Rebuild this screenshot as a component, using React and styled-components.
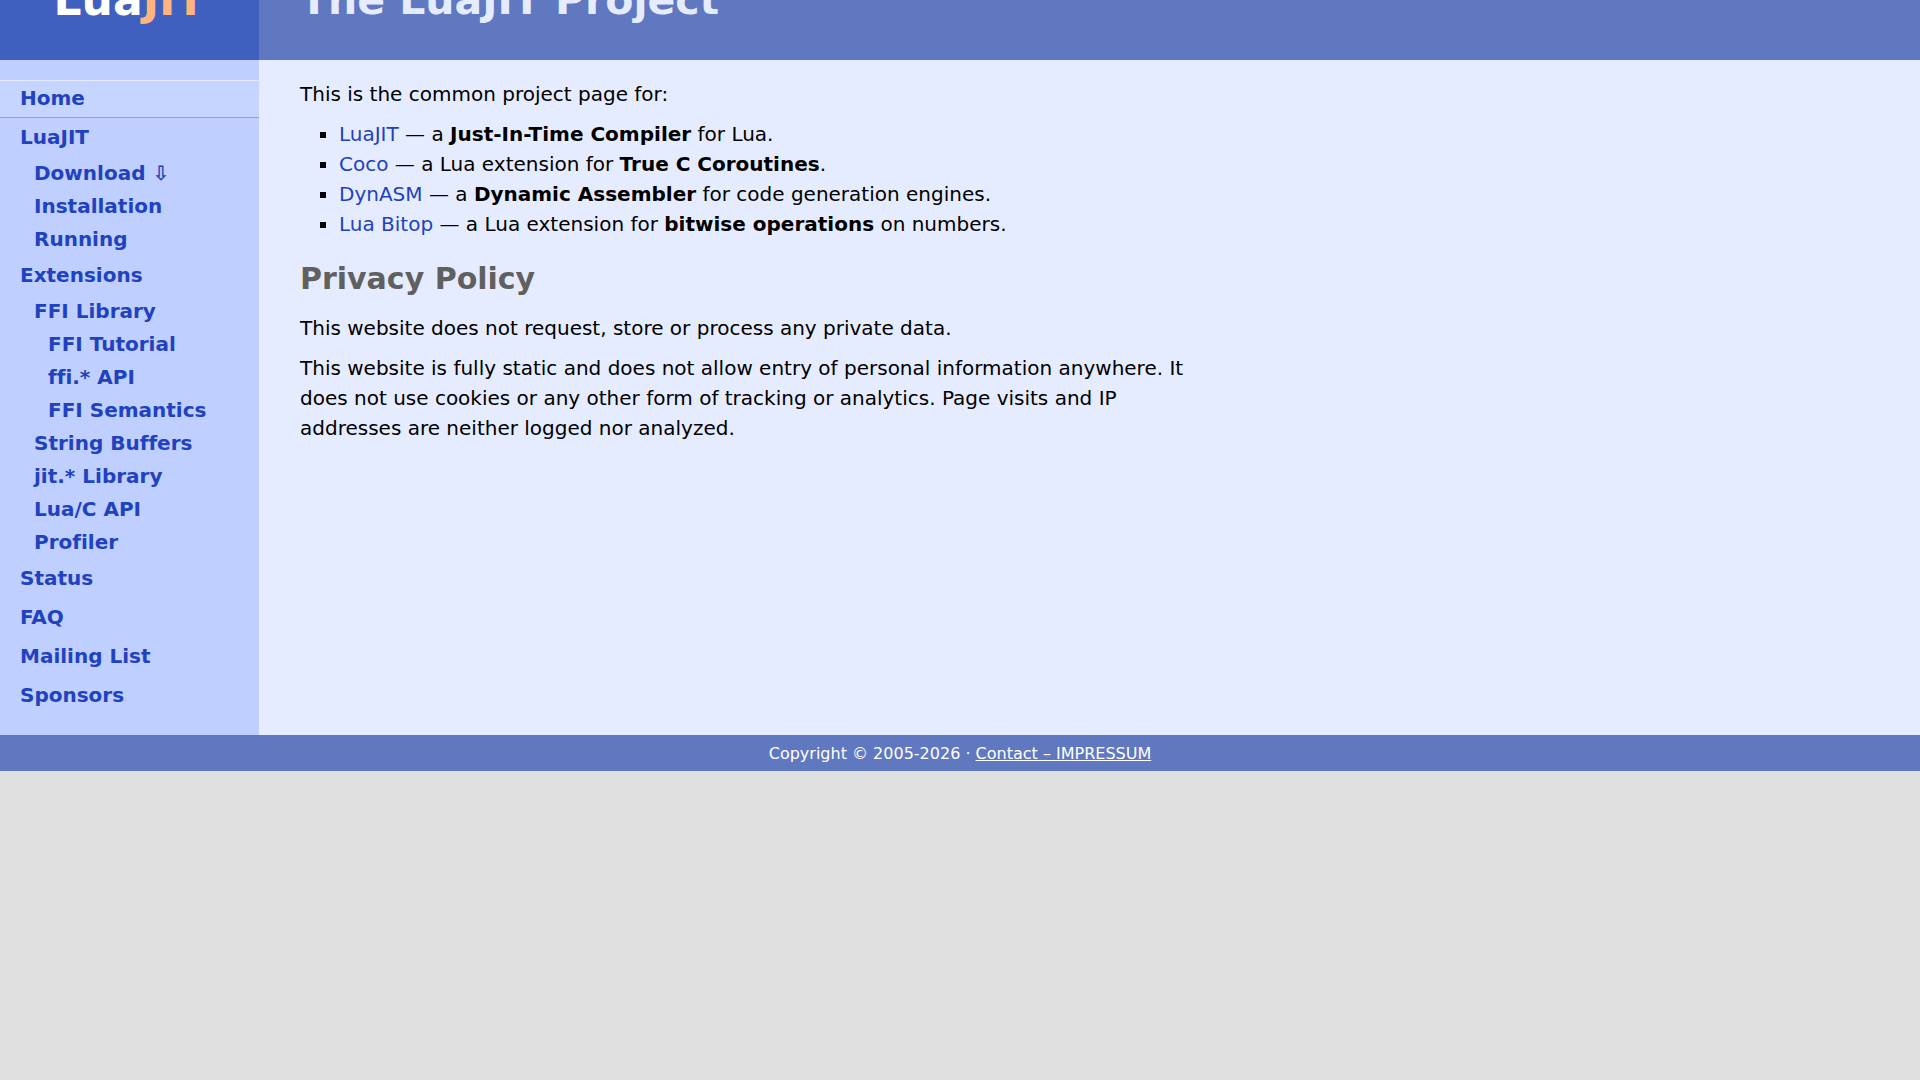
import React from 'react';
import styled, { createGlobalStyle } from 'styled-components';

const navItems = [
  { level: 0, label: 'Home', current: true },
  { level: 0, label: 'LuaJIT' },
  { level: 1, label: 'Download ⇩' },
  { level: 1, label: 'Installation' },
  { level: 1, label: 'Running' },
  { level: 0, label: 'Extensions' },
  { level: 1, label: 'FFI Library' },
  { level: 2, label: 'FFI Tutorial' },
  { level: 2, label: 'ffi.* API' },
  { level: 2, label: 'FFI Semantics' },
  { level: 1, label: 'String Buffers' },
  { level: 1, label: 'jit.* Library' },
  { level: 1, label: 'Lua/C API' },
  { level: 1, label: 'Profiler' },
  { level: 0, label: 'Status' },
  { level: 0, label: 'FAQ' },
  { level: 0, label: 'Mailing List' },
  { level: 0, label: 'Sponsors' },
];

const projects = [
  { name: 'LuaJIT', before: 'a', what: 'Just-In-Time Compiler', after: ' for Lua.' },
  { name: 'Coco', before: 'a Lua extension for', what: 'True C Coroutines', after: '.' },
  { name: 'DynASM', before: 'a', what: 'Dynamic Assembler', after: ' for code generation engines.' },
  { name: 'Lua Bitop', before: 'a Lua extension for', what: 'bitwise operations', after: ' on numbers.' },
];

const App = () => (
  <>
    <GlobalStyle />
    <Header>
      <Logo href="#">Lua<span>JIT</span></Logo>
      <Title>The LuaJIT Project</Title>
    </Header>
    <Body>
      <Nav>
        {navItems.map(item => (
          <NavLink key={item.label} href="#" $level={item.level} $current={item.current}>
            {item.label}
          </NavLink>
        ))}
      </Nav>
      <Main>
        <Paragraph>This is the common project page for:</Paragraph>
        <List>
          {projects.map(p => (
            <li key={p.name}>
              <Link href="#">{p.name}</Link> — {p.before} <b>{p.what}</b>{p.after}
            </li>
          ))}
        </List>
        <Heading>Privacy Policy</Heading>
        <Paragraph>This website does not request, store or process any private data.</Paragraph>
        <Paragraph>
          This website is fully static and does not allow entry of personal information
          anywhere. It does not use cookies or any other form of tracking or analytics.
          Page visits and IP addresses are neither logged nor analyzed.
        </Paragraph>
      </Main>
    </Body>
    <Footer>
      Copyright © 2005-2026 · <a href="#">Contact – IMPRESSUM</a>
    </Footer>
  </>
);

const GlobalStyle = createGlobalStyle`
  body {
    margin: 0;
    background: #e0e0e0;
    color: #000000;
    font-family: Verdana, 'DejaVu Sans', sans-serif;
    font-size: 20px;
    line-height: 30px;
    font-variant-ligatures: none;
  }
`
const Header = styled.header`
  display: flex;
  align-items: stretch;
  height: 60px;
  overflow: hidden;
  background: #6078bf;
  font-weight: bold;
  line-height: 48px;
`
const Logo = styled.a`
  display: flex;
  align-items: flex-end;
  justify-content: center;
  flex: none;
  width: 259px;
  box-sizing: border-box;
  padding-bottom: 36px;
  background: #4060bf;
  color: #ffffff;
  font-size: 44px;
  text-decoration: none;

  span {
    color: #ffb380;
  }
`
const Title = styled.h1`
  display: flex;
  align-items: flex-end;
  margin: 0;
  padding: 0 41px 36px;
  color: #e6ecff;
  font-size: 41px;
`
const Body = styled.div`
  display: flex;
  background: #e6ecff;
`
const Nav = styled.nav`
  flex: none;
  width: 259px;
  box-sizing: border-box;
  padding: 20px 0 19px;
  background: #bfcfff;
`
const NavLink = styled.a`
  display: block;
  box-sizing: border-box;
  height: ${p => (p.$level ? 33 : 38)}px;
  margin-bottom: ${p => (p.$level ? 0 : 1)}px;
  padding-left: ${p => 20 + p.$level * 14}px;
  border-style: solid;
  border-width: ${p => (p.$level ? 0 : 1)}px 0;
  border-color: ${p => (p.$current ? '#e6ecff transparent #8fa3db' : 'transparent')};
  background: ${p => (p.$current ? '#c5d5ff' : 'none')};
  color: #2142bf;
  font-weight: bold;
  line-height: ${p => (p.$level ? 30 : 34)}px;
  text-decoration: none;
`
const Main = styled.main`
  max-width: 910px;
  padding: 19px 41px 0;
`
const Paragraph = styled.p`
  margin: 0 0 10px;
`
const List = styled.ul`
  margin: 0 0 10px;
  padding-left: 39px;
  list-style: square;
`
const Heading = styled.h2`
  margin: 22px 0 16px;
  color: #606060;
  font-size: 30px;
  line-height: 36px;
`
const Link = styled.a`
  color: #2142bf;
  text-decoration: none;
`
const Footer = styled.footer`
  padding: 4px 0 2px;
  background: #6078bf;
  color: #ffffff;
  font-size: 16px;
  text-align: center;

  a {
    color: inherit;
  }
`
export default App;
